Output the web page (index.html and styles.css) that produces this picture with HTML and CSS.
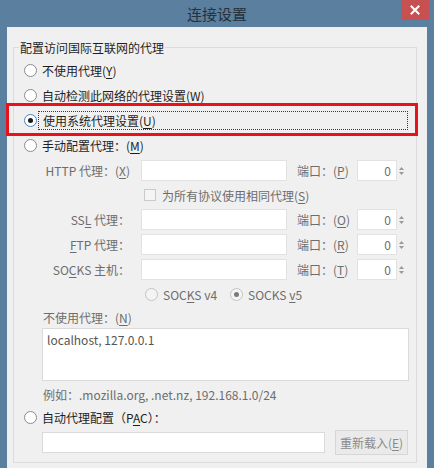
FILE: index.html
```html
<!DOCTYPE html>
<html>
<head>
<meta charset="utf-8">
<title>连接设置</title>
<link rel="stylesheet" href="styles.css">
</head>
<body>
<div class="window">
  <div class="titlebar">
    <span class="title">连接设置</span>
    <div class="close"><svg width="10" height="10" viewBox="0 0 10 10"><path d="M1.5 1.5 L8.5 8.5 M8.5 1.5 L1.5 8.5" stroke="#fff" stroke-width="2" stroke-linecap="square"/></svg></div>
  </div>
  <div class="content">
    <div class="group">
      <div class="legend">配置访问国际互联网的代理</div>

      <div class="radio-row"><span class="radio"></span><span class="lbl">不使用代理(<u>Y</u>)</span></div>
      <div class="radio-row"><span class="radio"></span><span class="lbl">自动检测此网络的代理设置(<u>W</u>)</span></div>
      <div class="radio-row selected-row">
        <span class="radio checked"></span><span class="lbl focus">使用系统代理设置(<u>U</u>)</span>
        <div class="highlight"></div>
      </div>
      <div class="radio-row"><span class="radio"></span><span class="lbl">手动配置代理：(<u>M</u>)</span></div>

      <div class="prow">
        <span class="plabel">HTTP 代理：(<u>X</u>)</span>
        <span class="input"></span>
        <span class="port">端口：(<u>P</u>)</span>
        <div class="spin"><span class="spin-box">0</span><span class="arrows"><svg width="5" height="12" viewBox="0 0 5 12"><path d="M2.5 2 L5 5 L0 5 Z M0 7 L5 7 L2.5 10 Z" fill="#9a9a9a"/></svg></span></div>
      </div>
      <div class="crow"><span class="checkbox"></span><span class="dim">为所有协议使用相同代理(<u>S</u>)</span></div>
      <div class="prow">
        <span class="plabel">SS<u>L</u> 代理：</span>
        <span class="input"></span>
        <span class="port">端口：(<u>O</u>)</span>
        <div class="spin"><span class="spin-box">0</span><span class="arrows"><svg width="5" height="12" viewBox="0 0 5 12"><path d="M2.5 2 L5 5 L0 5 Z M0 7 L5 7 L2.5 10 Z" fill="#9a9a9a"/></svg></span></div>
      </div>
      <div class="prow">
        <span class="plabel"><u>F</u>TP 代理：</span>
        <span class="input"></span>
        <span class="port">端口：(<u>R</u>)</span>
        <div class="spin"><span class="spin-box">0</span><span class="arrows"><svg width="5" height="12" viewBox="0 0 5 12"><path d="M2.5 2 L5 5 L0 5 Z M0 7 L5 7 L2.5 10 Z" fill="#9a9a9a"/></svg></span></div>
      </div>
      <div class="prow">
        <span class="plabel">SO<u>C</u>KS 主机：</span>
        <span class="input"></span>
        <span class="port">端口：(<u>T</u>)</span>
        <div class="spin"><span class="spin-box">0</span><span class="arrows"><svg width="5" height="12" viewBox="0 0 5 12"><path d="M2.5 2 L5 5 L0 5 Z M0 7 L5 7 L2.5 10 Z" fill="#9a9a9a"/></svg></span></div>
      </div>
      <div class="srow">
        <div class="sopt"><span class="radio disabled"></span><span class="dim">SOC<u>K</u>S v4</span></div>
        <div class="sopt"><span class="radio disabled dchecked"></span><span class="dim">SOCKS <u>v</u>5</span></div>
      </div>
      <div class="nrow dim">不使用代理：(<u>N</u>)</div>
      <div class="textarea">localhost, 127.0.0.1</div>
      <div class="erow dim">例如：.mozilla.org, .net.nz, 192.168.1.0/24</div>
      <div class="radio-row pac"><span class="radio"></span><span class="lbl">自动代理配置（P<u>A</u>C）：</span></div>
      <div class="pacrow">
        <span class="pacinput"></span>
        <span class="button">重新载入(<u>E</u>)</span>
      </div>
    </div>
  </div>
</div>
</body>
</html>
```

FILE: styles.css
```css
html, body {
  margin: 0;
  padding: 0;
}
body {
  width: 434px;
  height: 468px;
  overflow: hidden;
  background: #5b7f9e;
  font-family: "Noto Sans CJK SC", "Microsoft YaHei", sans-serif;
  font-size: 12px;
  color: #1e1e1e;
}
u {
  text-underline-offset: 2px;
}
.titlebar {
  height: 27px;
  display: grid;
  grid-template-columns: 1fr auto 1fr;
  align-items: start;
}
.title {
  grid-column: 2;
  font-size: 15px;
  line-height: 27px;
  color: #26313c;
}
.close {
  grid-column: 3;
  justify-self: end;
  margin-right: 5px;
  width: 28px;
  height: 20px;
  background: #c75050;
  display: flex;
  align-items: center;
  justify-content: center;
}
.content {
  margin: 0 7px;
  height: 441px;
  box-sizing: border-box;
  background: #f0f0f0;
  padding: 20px 10px 0 6px;
}
.group {
  position: relative;
  border: 1px solid #dcdcdc;
  padding: 10px 0 7px 0;
}
.legend {
  position: absolute;
  top: -9px;
  left: 5px;
  padding: 0 1px;
  line-height: 17px;
  background: #f0f0f0;
}
.radio-row {
  position: relative;
  height: 25px;
  display: flex;
  align-items: center;
  padding-left: 10px;
}
.radio {
  flex: none;
  width: 13px;
  height: 13px;
  box-sizing: border-box;
  border: 1px solid #8c8c8c;
  border-radius: 50%;
  background: #fff;
  margin-right: 5px;
  display: flex;
  align-items: center;
  justify-content: center;
}
.radio.checked {
  border-color: #4a86bd;
}
.radio.checked::after {
  content: "";
  width: 5px;
  height: 5px;
  border-radius: 50%;
  background: #1c1c1c;
}
.radio.disabled {
  border-color: #c4c4c4;
  background: #f4f4f4;
}
.radio.dchecked::after {
  content: "";
  width: 5px;
  height: 5px;
  border-radius: 50%;
  background: #7a7a7a;
}
.lbl {
  line-height: 17px;
}
.selected-row .radio {
  margin-right: 1px;
}
.lbl.focus {
  flex: 1;
  margin-right: 8px;
  padding-left: 4px;
  height: 19px;
  box-sizing: border-box;
  border: 1px dotted #3a3a3a;
  line-height: 17px;
}
.highlight {
  position: absolute;
  left: -8px;
  top: -5px;
  width: 412px;
  height: 33px;
  box-sizing: border-box;
  border: 3px solid #e8121b;
}
.dim {
  color: #6d6d6d;
}
.prow {
  height: 25px;
  display: flex;
  align-items: center;
}
.plabel {
  width: 116px;
  margin-right: 11px;
  text-align: right;
  color: #6d6d6d;
  white-space: nowrap;
}
.input {
  width: 146px;
  height: 21px;
  box-sizing: border-box;
  border: 1px solid #e2e2e2;
  background: #fff;
}
.port {
  width: 50px;
  margin-left: 10px;
  color: #6d6d6d;
  white-space: nowrap;
}
.spin {
  margin-left: 10px;
  width: 47px;
  height: 21px;
  display: flex;
}
.spin-box {
  flex: 1;
  box-sizing: border-box;
  border: 1px solid #e2e2e2;
  background: #fff;
  text-align: right;
  padding-right: 5px;
  line-height: 19px;
  color: #6d6d6d;
}
.arrows {
  width: 7px;
  display: flex;
  align-items: center;
  justify-content: flex-end;
}
.crow {
  height: 24px;
  display: flex;
  align-items: center;
  padding-left: 130px;
}
.checkbox {
  width: 12px;
  height: 12px;
  box-sizing: border-box;
  border: 1px solid #cacaca;
  background: #f4f4f4;
  margin-right: 6px;
}
.srow {
  height: 24px;
  display: flex;
  align-items: center;
  padding-left: 131px;
}
.sopt {
  display: flex;
  align-items: center;
}
.sopt:first-child {
  width: 85px;
}
.nrow {
  height: 22px;
  display: flex;
  align-items: center;
  padding-left: 29px;
}
.textarea {
  margin-left: 28px;
  width: 367px;
  height: 53px;
  box-sizing: border-box;
  border: 1px solid #dadada;
  background: #fff;
  padding: 2px 4px;
  line-height: 17px;
  color: #555;
}
.erow {
  height: 26px;
  display: flex;
  align-items: center;
  padding-left: 29px;
}
.radio-row.pac {
  height: 20px;
}
.pacrow {
  margin-top: 3px;
  height: 25px;
  display: flex;
  align-items: center;
  padding-left: 28px;
}
.pacinput {
  width: 283px;
  height: 21px;
  box-sizing: border-box;
  border: 1px solid #dadada;
  background: #fff;
}
.button {
  margin-left: 10px;
  width: 73px;
  height: 25px;
  box-sizing: border-box;
  border: 1px solid #d6d6d6;
  background: #eaeaea;
  color: #8a8a8a;
  display: flex;
  align-items: center;
  justify-content: center;
}
```
